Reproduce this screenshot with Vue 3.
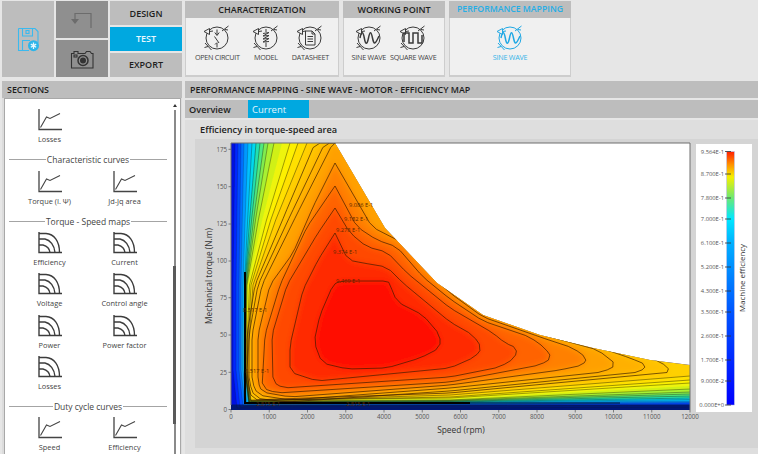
<script setup>
const motorGroups = [
  {
    title: 'CHARACTERIZATION',
    cls: 'char',
    items: [
      { label: 'OPEN CIRCUIT', inner: 'M15 6.5V12M12.8 9.5L15 12.5 17.2 9.5M12.5 13.5L17 20M15 20V24.5M13 21.5L15 19.5' },
      { label: 'MODEL', inner: 'M15 6V9M12 10.5L18 9.5 12 13 18 12.5 12 16 18 15.5 12 19 18 18.5M15 19.5V24' },
      { label: 'DATASHEET', inner: 'M10.5 8H17L20 11V22H10.5ZM17 8V11H20M12.5 13.5H18M12.5 16H18M12.5 18.5H18' },
    ],
  },
  {
    title: 'WORKING POINT',
    cls: 'work',
    items: [
      { label: 'SINE WAVE', thick: true, inner: 'M6 15C7.5 8 9 8 10.3 15S13 22 14.5 15 17 8 18.5 15 21 22 25 13' },
      { label: 'SQUARE WAVE', thick: true, inner: 'M6 19V10H11V20H15V10H20V20H24V12' },
    ],
  },
  {
    title: 'PERFORMANCE MAPPING',
    cls: 'perf',
    active: true,
    items: [
      { label: 'SINE WAVE', thick: true, inner: 'M6 15C7.5 8 9 8 10.3 15S13 22 14.5 15 17 8 18.5 15 21 22 25 13' },
    ],
  },
]

const sections = [
  { items: [{ label: 'Losses', type: 'curve' }, null] },
  { title: 'Characteristic curves', items: [{ label: 'Torque (I. Ψ)', type: 'curve' }, { label: 'Jd-Jq area', type: 'curve' }] },
  {
    title: 'Torque - Speed maps',
    items: [
      { label: 'Efficiency', type: 'map' }, { label: 'Current', type: 'map' },
      { label: 'Voltage', type: 'map' }, { label: 'Control angle', type: 'map' },
      { label: 'Power', type: 'map' }, { label: 'Power factor', type: 'map' },
      { label: 'Losses', type: 'map' }, null,
    ],
  },
  { title: 'Duty cycle curves', items: [{ label: 'Speed', type: 'curve' }, { label: 'Efficiency', type: 'curve' }] },
]

// plot area in page pixels
const envelope = '231,143 335,143 385,228 437,283 483,315 540,335 593,348 650,360 690,365 690,410 231,410'

// [top x, x at y=285, x low, corner y, y at x=450, y at right edge, colour, line opacity]
const openLevels = [
  [235, 233, 233, 408, 408, 407, '#0028ff', 0.3],
  [238, 236, 236, 407, 406, 405, '#0048ff', 0.3],
  [241, 239, 239, 406, 405, 403, '#0070ff', 0.3],
  [244, 241, 241, 405, 404, 402, '#0098ff', 0.3],
  [248, 243, 243, 404, 403, 401, '#00c0ff', 0.35],
  [252, 244.5, 244.5, 403, 402.5, 399.5, '#00d8f0', 0.5],
  [256, 245, 245, 402.5, 402, 398, '#20e0b0', 0.6],
  [260, 245.5, 245, 402, 401.5, 396, '#50e880', 0.6],
  [264, 246, 245.2, 402, 401, 394, '#80ec50', 0.6],
  [268, 246.5, 245.4, 401.5, 400.5, 392, '#a8f030', 0.6],
  [274, 247, 245.6, 401, 400, 389, '#d0f018', 0.6],
  [282, 248, 245.8, 400, 399, 386, '#eef408', 0],
  [290, 249.5, 246, 400, 398, 383, '#fdf000', 0.65],
  [298, 251, 246.5, 400.5, 397, 380, '#ffe000', 0.7],
  [307, 253, 247, 401, 395, 376, '#ffd000', 0.7],
].map(([top, mid, low, cy, yb, yr, color, op]) => {
  const x220 = top + (mid - top) * 0.58
  const line = `${top},143 ${x220},220 ${mid},285 ${low},370 ${low + 4},${cy} 450,${yb} 690,${yr}`
  return { line, fill: `${line} 690,143`, color, op }
})

// rounds every corner a little, the first one can stay sharp (the peaks of the contours)
function smooth(str, sharpFirst) {
  const p = str.split(' ').map((s) => s.split(',').map(Number))
  const out = []
  p.forEach((c, i) => {
    if (i === 0 && sharpFirst) {
      out.push(c)
      return
    }
    const a = p[(i + p.length - 1) % p.length]
    const b = p[(i + 1) % p.length]
    for (const o of [a, b]) {
      const d = Math.hypot(o[0] - c[0], o[1] - c[1])
      const k = Math.min(5, d * 0.3) / d
      out.push([c[0] + (o[0] - c[0]) * k, c[1] + (o[1] - c[1]) * k])
    }
  })
  return out.map((q) => q[0].toFixed(1) + ',' + q[1].toFixed(1)).join(' ')
}

const closedLevels = [
  { color: '#ffc000', pts: '315,143 340,143 395,225 445,280 490,313 590,346 640,356 660,361 672,372 450,393 252,400 248,382 247,335 255,285 285,214' },
  { color: '#ffb000', pts: '325,143 340,143 395,225 445,280 490,313 540,333 598,347 630,358 647,365 640,372 450,391 286,402 255,398 249,382 249,335 258,285 291,214' },
  { color: '#ffa000', pts: '333,143 340,143 395,225 445,280 490,313 540,334 598,350 617,365 603,372 450,388 290,400 258,395 252,382 252,335 262,285 297,214' },
  { color: '#ff8000', pts: '335,163 372,227 403,243 433,277 450,293 483,317 540,337 573,348 587,358 583,365 560,370 450,385 290,397 262,392 258,382 258,335 270,285 293,253 313,207', peak: true },
  { color: '#ff6400', pts: '335,186 357,227 377,240 397,247 423,277 450,299 483,321 530,337 545,348 552,358 540,365 450,382 277,393 262,388 265,335 280,285 307,227', peak: true },
  { color: '#ff4800', pts: '335,208 350,233 367,247 387,252 407,273 450,308 493,333 505,343 517,348 515,358 500,367 450,377 283,388 273,382 272,335 287,285 318,233', peak: true },
  { color: '#ff2a00', pts: '335,233 348,260 363,263 387,267 403,283 450,322 473,335 482,348 475,357 450,368 317,381 290,372 290,345 303,290 318,260', peak: true },
  { color: '#ff1000', pts: '333,285 340,281 388,281 390,285 397,302 423,315 440,335 440,348 420,358 387,368 347,369 322,363 314,342 320,315' },
].map((l) => ({ color: l.color, pts: smooth(l.pts, l.peak) }))

const contourLabels = [
  { x: 349, y: 207, t: '9.086 E-1' },
  { x: 344, y: 221, t: '9.182 E-1' },
  { x: 336, y: 232, t: '9.278 E-1' },
  { x: 333, y: 254, t: '9.374 E-1' },
  { x: 336, y: 283, t: '9.469 E-1' },
  { x: 243, y: 312, t: '8.517 E-1' },
  { x: 245, y: 373, t: '8.517 E-1' },
  { x: 256, y: 406, t: '2.815 E-1' },
  { x: 346, y: 406, t: '2.815 E-1' },
]

const yTicks = [
  { v: 175, y: 149.3 }, { v: 150, y: 186.7 }, { v: 125, y: 224 }, { v: 100, y: 261 },
  { v: 75, y: 297.7 }, { v: 50, y: 335 }, { v: 25, y: 372.3 }, { v: 0, y: 409.5 },
]
const xTicks = Array.from({ length: 13 }, (_, i) => ({ v: i * 1000, x: 231 + i * 38.25 }))

const barTicks = [
  ['9.564E-1', 151.5], ['8.700E-1', 174], ['7.800E-1', 198], ['7.000E-1', 219],
  ['6.100E-1', 243], ['5.200E-1', 267], ['4.300E-1', 291], ['3.500E-1', 312],
  ['2.600E-1', 336], ['1.700E-1', 360], ['9.000E-2', 381], ['0.000E+0', 405],
]
</script>

<template>
  <div class="app">
    <div class="top">
      <div class="tile save">
        <svg width="28" height="28" viewBox="0 0 28 28" fill="none" stroke="#3bb9ee" stroke-width="1.1">
          <path d="M4.5 3.5H21L24 6.5V18M15 25.5H4.5V3.5" />
          <path d="M8.5 3.5V11H18.5V3.5M8.5 25.5V15.5H16" />
          <rect x="12" y="5.5" width="3" height="3" />
          <circle cx="19.5" cy="20.7" r="5.5" fill="#2cb5ea" stroke="none" />
          <path d="M19.5 17.5V24M16.8 19.1L22.2 22.3M22.2 19.1L16.8 22.3" stroke="#e8f8ff" stroke-width="1.3" />
        </svg>
      </div>
      <div class="tools">
        <div class="tile dark">
          <svg width="24" height="18" viewBox="0 0 24 18" fill="none" stroke="#6c6c6c" stroke-width="1.2">
            <path d="M21 17V2.5H5V8" />
            <path d="M1 8H9L5 13Z" fill="#6c6c6c" stroke="none" />
          </svg>
        </div>
        <div class="tile dark">
          <svg width="24" height="20" viewBox="0 0 24 20" fill="none" stroke="#333" stroke-width="1.1">
            <path d="M1.5 4.5H4V2.5H8V4.5H15L16.5 2.5H20L21.5 4.5H23V19H1.5Z" />
            <rect x="4" y="6" width="3" height="2" />
            <circle cx="13" cy="11.5" r="5" stroke-width="1.5" />
            <circle cx="13" cy="11.5" r="3" fill="#333" stroke="none" />
          </svg>
        </div>
      </div>
      <div class="modes">
        <div class="mode">DESIGN</div>
        <div class="mode on">TEST</div>
        <div class="mode">EXPORT</div>
      </div>

      <div
        v-for="g in motorGroups"
        :key="g.title"
        class="group"
        :class="[g.cls, { active: g.active }]"
      >
        <div class="group-head">{{ g.title }}</div>
        <div class="group-body">
          <div v-for="it in g.items" :key="it.label" class="motor">
            <svg width="30" height="30" viewBox="0 0 30 30" fill="none" class="motor-icon">
              <circle cx="15" cy="15" r="11" stroke-width="1" />
              <path d="M2 8.5L7.5 5.5V11.5Z" class="knock" stroke-width="1" />
              <path d="M7.5 8.5L11 8" stroke-width="1" />
              <path d="M20 8L26.5 3M23 6.5L26 7" stroke-width="1" />
              <path d="M3 20L9.5 27M2.5 24.5L6 23.5" stroke-width="1" />
              <path :d="it.inner" :stroke-width="it.thick ? 1.5 : 1" />
            </svg>
            <span>{{ it.label }}</span>
          </div>
        </div>
      </div>
    </div>

    <div class="bottom">
      <aside class="sections">
        <div class="bar">SECTIONS</div>
        <div class="panel">
          <div class="list">
            <template v-for="(s, i) in sections" :key="i">
              <div v-if="s.title" class="sep"><span>{{ s.title }}</span></div>
              <div class="grid">
                <template v-for="(it, j) in s.items" :key="j">
                  <div v-if="it" class="entry">
                    <svg v-if="it.type === 'curve'" width="26" height="24" viewBox="0 0 26 24" fill="none" stroke="#444">
                      <path d="M2 1V21.5H25" stroke-width="1.3" />
                      <path d="M3.5 19.5L9.5 9 13 10.5 23 5.5" stroke-width="1.1" />
                    </svg>
                    <svg v-else width="26" height="24" viewBox="0 0 26 24" fill="none" stroke="#3c3c3c" stroke-width="1.4">
                      <path d="M2 1V21.5H25" />
                      <path d="M2 2.5H9C17 3 22.5 10 22.5 21.5" />
                      <path d="M2 8H8C13 9 17.5 14 18 21.5" />
                      <path d="M2 14H6C10 15 12.5 17 13 21.5" />
                    </svg>
                    <span>{{ it.label }}</span>
                  </div>
                  <div v-else></div>
                </template>
              </div>
            </template>
          </div>
          <div class="scroll">
            <i class="arrow"></i>
            <i class="thumb"></i>
          </div>
        </div>
      </aside>

      <main class="main">
        <div class="bar">PERFORMANCE MAPPING - SINE WAVE - MOTOR - EFFICIENCY MAP</div>
        <div class="tabs">
          <div class="tab">Overview</div>
          <div class="tab on">Current</div>
        </div>
        <div class="content">
          <div class="content-title">Efficiency in torque-speed area</div>
          <div class="chart">
            <svg width="563" height="309" viewBox="195 139 563 309" class="chart-svg">
              <defs>
                <clipPath id="env"><polygon :points="envelope" /></clipPath>
                <filter id="soft" x="-10%" y="-10%" width="120%" height="120%">
                  <feGaussianBlur stdDeviation="3" />
                </filter>
                <filter id="softer" x="-5%" y="-5%" width="110%" height="110%">
                  <feGaussianBlur stdDeviation="0.5" />
                </filter>
                <linearGradient id="barGrad" x1="0" y1="0" x2="0" y2="1">
                  <stop offset="0" stop-color="#ff2000" />
                  <stop offset="0.05" stop-color="#ff9000" />
                  <stop offset="0.1" stop-color="#f4f000" />
                  <stop offset="0.18" stop-color="#70e870" />
                  <stop offset="0.265" stop-color="#00e8ff" />
                  <stop offset="0.36" stop-color="#00b0ff" />
                  <stop offset="0.5" stop-color="#0080ff" />
                  <stop offset="0.65" stop-color="#0050ff" />
                  <stop offset="1" stop-color="#0000ff" />
                </linearGradient>
              </defs>

              <rect x="231" y="143" width="459" height="267" fill="#fff" />
              <g clip-path="url(#env)">
                <rect x="231" y="143" width="459" height="267" fill="#0010e0" />
                <g filter="url(#softer)">
                  <polygon v-for="(l, i) in openLevels" :key="i" :points="l.fill" :fill="l.color" />
                </g>
                <g filter="url(#soft)">
                  <polygon v-for="(l, i) in closedLevels" :key="i" :points="l.pts" :fill="l.color" />
                </g>
                <path d="M231 407.5H690" stroke="#00186c" stroke-width="6" opacity="0.9" />
                <polyline
                  v-for="(l, i) in openLevels"
                  :key="'o' + i"
                  :points="l.line"
                  fill="none"
                  stroke="#141400"
                  stroke-width="0.6"
                  :stroke-opacity="l.op"
                />
                <polygon
                  v-for="(l, i) in closedLevels"
                  :key="'c' + i"
                  :points="l.pts"
                  fill="none"
                  stroke="#3a1a00"
                  stroke-width="0.8"
                  stroke-opacity="0.85"
                />
                <path d="M245 272V403H470" fill="none" stroke="#000" stroke-width="2" />
                <path d="M470 403H620" fill="none" stroke="#001030" stroke-width="1.2" />
              </g>
              <text v-for="c in contourLabels" :key="c.t + c.x" :x="c.x" :y="c.y" class="clabel">{{ c.t }}</text>
              <path d="M231 405V143H690V410" fill="none" stroke="#6e6e6e" stroke-width="1" />

              <g v-for="t in yTicks" :key="t.v">
                <path :d="`M228.5 ${t.y}H231`" stroke="#666" stroke-width="0.8" />
                <text :x="227" :y="t.y + 2.3" text-anchor="end" class="tick">{{ t.v }}</text>
              </g>
              <g v-for="t in xTicks" :key="t.v">
                <path :d="`M${t.x} 410V412.5`" stroke="#666" stroke-width="0.8" />
                <text :x="t.x" y="419" text-anchor="middle" class="tick">{{ t.v }}</text>
              </g>
              <text x="461" y="433" text-anchor="middle" class="axis">Speed (rpm)</text>
              <text transform="translate(212 276) rotate(-90)" text-anchor="middle" class="axis">Mechanical torque (N.m)</text>

              <rect x="696" y="144" width="56" height="268" fill="#fff" />
              <rect x="726.7" y="151.7" width="7.6" height="253.3" fill="url(#barGrad)" stroke="#aab0e0" stroke-width="0.5" />
              <g v-for="b in barTicks" :key="b[0]">
                <path :d="`M725 ${b[1]}H731`" stroke="#333" stroke-width="0.8" />
                <text x="724" :y="b[1] + 2" text-anchor="end" class="tick small">{{ b[0] }}</text>
              </g>
              <text transform="translate(745 278) rotate(-90)" text-anchor="middle" class="axis bar-title">Machine efficiency</text>
            </svg>
          </div>
        </div>
      </main>
    </div>
  </div>
</template>

<style>
html, body {
  margin: 0;
  background: #e6e6e6;
}
</style>

<style scoped>
.app {
  width: 758px;
  height: 454px;
  overflow: hidden;
  background: #e6e6e6;
  font-family: "Open Sans", "Liberation Sans", sans-serif;
  color: #222;
}
.top {
  display: flex;
  height: 76px;
  padding: 1px 0 0 2px;
  margin-bottom: 4px;
}
.tile {
  display: flex;
  align-items: center;
  justify-content: center;
}
.save {
  width: 52px;
  background: #bdbdbd;
  margin-right: 2px;
}
.tools {
  width: 52px;
  display: flex;
  flex-direction: column;
  gap: 2px;
  margin-right: 2px;
}
.dark {
  flex: 1;
  background: #8f8f8f;
}
.modes {
  width: 72px;
  display: flex;
  flex-direction: column;
  gap: 1.5px;
  margin-right: 3px;
}
.mode {
  flex: 1;
  display: flex;
  align-items: center;
  justify-content: center;
  background: #bdbdbd;
  font-size: 9px;
  font-weight: 600;
  color: #1e1e1e;
}
.mode.on {
  background: #00a8e0;
  color: #e8f8ff;
}
.group {
  display: flex;
  flex-direction: column;
  margin-right: 4px;
}
.group.char { width: 154px; }
.group.work { width: 102px; }
.group.perf { width: 122px; }
.group-head {
  height: 17px;
  line-height: 17px;
  background: #bdbdbd;
  text-align: center;
  font-size: 9px;
  font-weight: 600;
  color: #1e1e1e;
}
.perf .group-head {
  font-size: 8.7px;
}
.group-body {
  flex: 1;
  display: flex;
  justify-content: center;
  gap: 11px;
  background: #f0f0f0;
  border: 1px solid #cdcdcd;
  border-top: 0;
  border-bottom-width: 2px;
  padding-top: 5px;
}
.group.work .group-body {
  gap: 4px;
}
.motor {
  display: flex;
  flex-direction: column;
  align-items: center;
  font-size: 7.2px;
  letter-spacing: -0.25px;
  line-height: 10px;
  color: #444;
}
.motor span {
  margin-top: -1px;
}
.motor-icon {
  stroke: #3a3a3a;
}
.knock {
  fill: #f0f0f0;
}
.active .group-head {
  color: #26aee6;
}
.active .motor {
  color: #35b4e8;
}
.active .motor-icon {
  stroke: #20a8e4;
}
.bottom {
  display: flex;
  height: 373px;
  padding-left: 2px;
}
.sections {
  width: 180px;
  margin-right: 3px;
  display: flex;
  flex-direction: column;
  background: #dcdcdc;
}
.bar {
  height: 17px;
  line-height: 17px;
  background: #bdbdbd;
  padding-left: 5px;
  font-size: 8.9px;
  font-weight: 600;
  color: #1e1e1e;
}
.panel {
  position: relative;
  flex: 1;
  margin: 0 1px 0 2px;
  background: #fff;
  border: 1px solid #a8a8a8;
  border-bottom: 0;
  overflow: hidden;
}
.list {
  padding-top: 9px;
}
.grid {
  display: grid;
  grid-template-columns: 75px 75px;
  padding-left: 7px;
}
.entry {
  height: 41.2px;
  display: flex;
  flex-direction: column;
  align-items: center;
  font-size: 7.4px;
  line-height: 10px;
  color: #444;
}
.entry span {
  margin-top: 2px;
}
.sep {
  height: 20.4px;
  box-sizing: border-box;
  padding-top: 1px;
  margin: 0 13px 0 4px;
  display: flex;
  align-items: center;
  font-size: 8.5px;
  color: #444;
}
.sep::before,
.sep::after {
  content: "";
  flex: 1;
  height: 1px;
  background: #a4a4a4;
}
.sep span {
  padding: 0 1px;
}
.scroll {
  position: absolute;
  top: 0;
  bottom: 0;
  left: 168px;
  width: 3px;
}
.scroll::before {
  content: "";
  position: absolute;
  left: 0.5px;
  top: 11px;
  bottom: 0;
  width: 2px;
  background: #8a8a8a;
}
.arrow {
  position: absolute;
  left: -0.5px;
  top: 5px;
  border: 2px solid transparent;
  border-top: 0;
  border-bottom: 3px solid #333;
}
.thumb {
  position: absolute;
  left: 0;
  top: 167px;
  width: 3px;
  height: 158px;
  background: #5a5a5a;
}
.main {
  flex: 1;
  display: flex;
  flex-direction: column;
}
.tabs {
  display: flex;
  height: 18px;
  margin-top: 2px;
  padding-left: 1px;
  background: #bdbdbd;
}
.tab {
  width: 61px;
  line-height: 20px;
  padding-left: 3px;
  box-sizing: border-box;
  font-size: 9.2px;
  font-weight: 600;
  color: #222;
}
.tab.on {
  margin-left: 1px;
  padding-left: 4px;
  background: #00a8e0;
  font-size: 9.5px;
  font-weight: 400;
  color: #e0f6ff;
}
.content {
  flex: 1;
  margin-top: 2px;
  background: #dedede;
}
.content-title {
  height: 19px;
  line-height: 20px;
  padding-left: 15px;
  font-size: 9.2px;
  font-weight: 600;
  color: #222;
}
.chart {
  margin-left: 10px;
  height: 309px;
  background: #d4d4d4;
}
.chart-svg {
  display: block;
}
.tick {
  font-size: 6.2px;
  fill: #555;
}
.small {
  font-size: 5.8px;
}
.axis {
  font-size: 8.4px;
  fill: #333;
}
.bar-title {
  font-size: 7.9px;
}
.clabel {
  font-size: 5.7px;
  fill: #5a2a00;
}
</style>
